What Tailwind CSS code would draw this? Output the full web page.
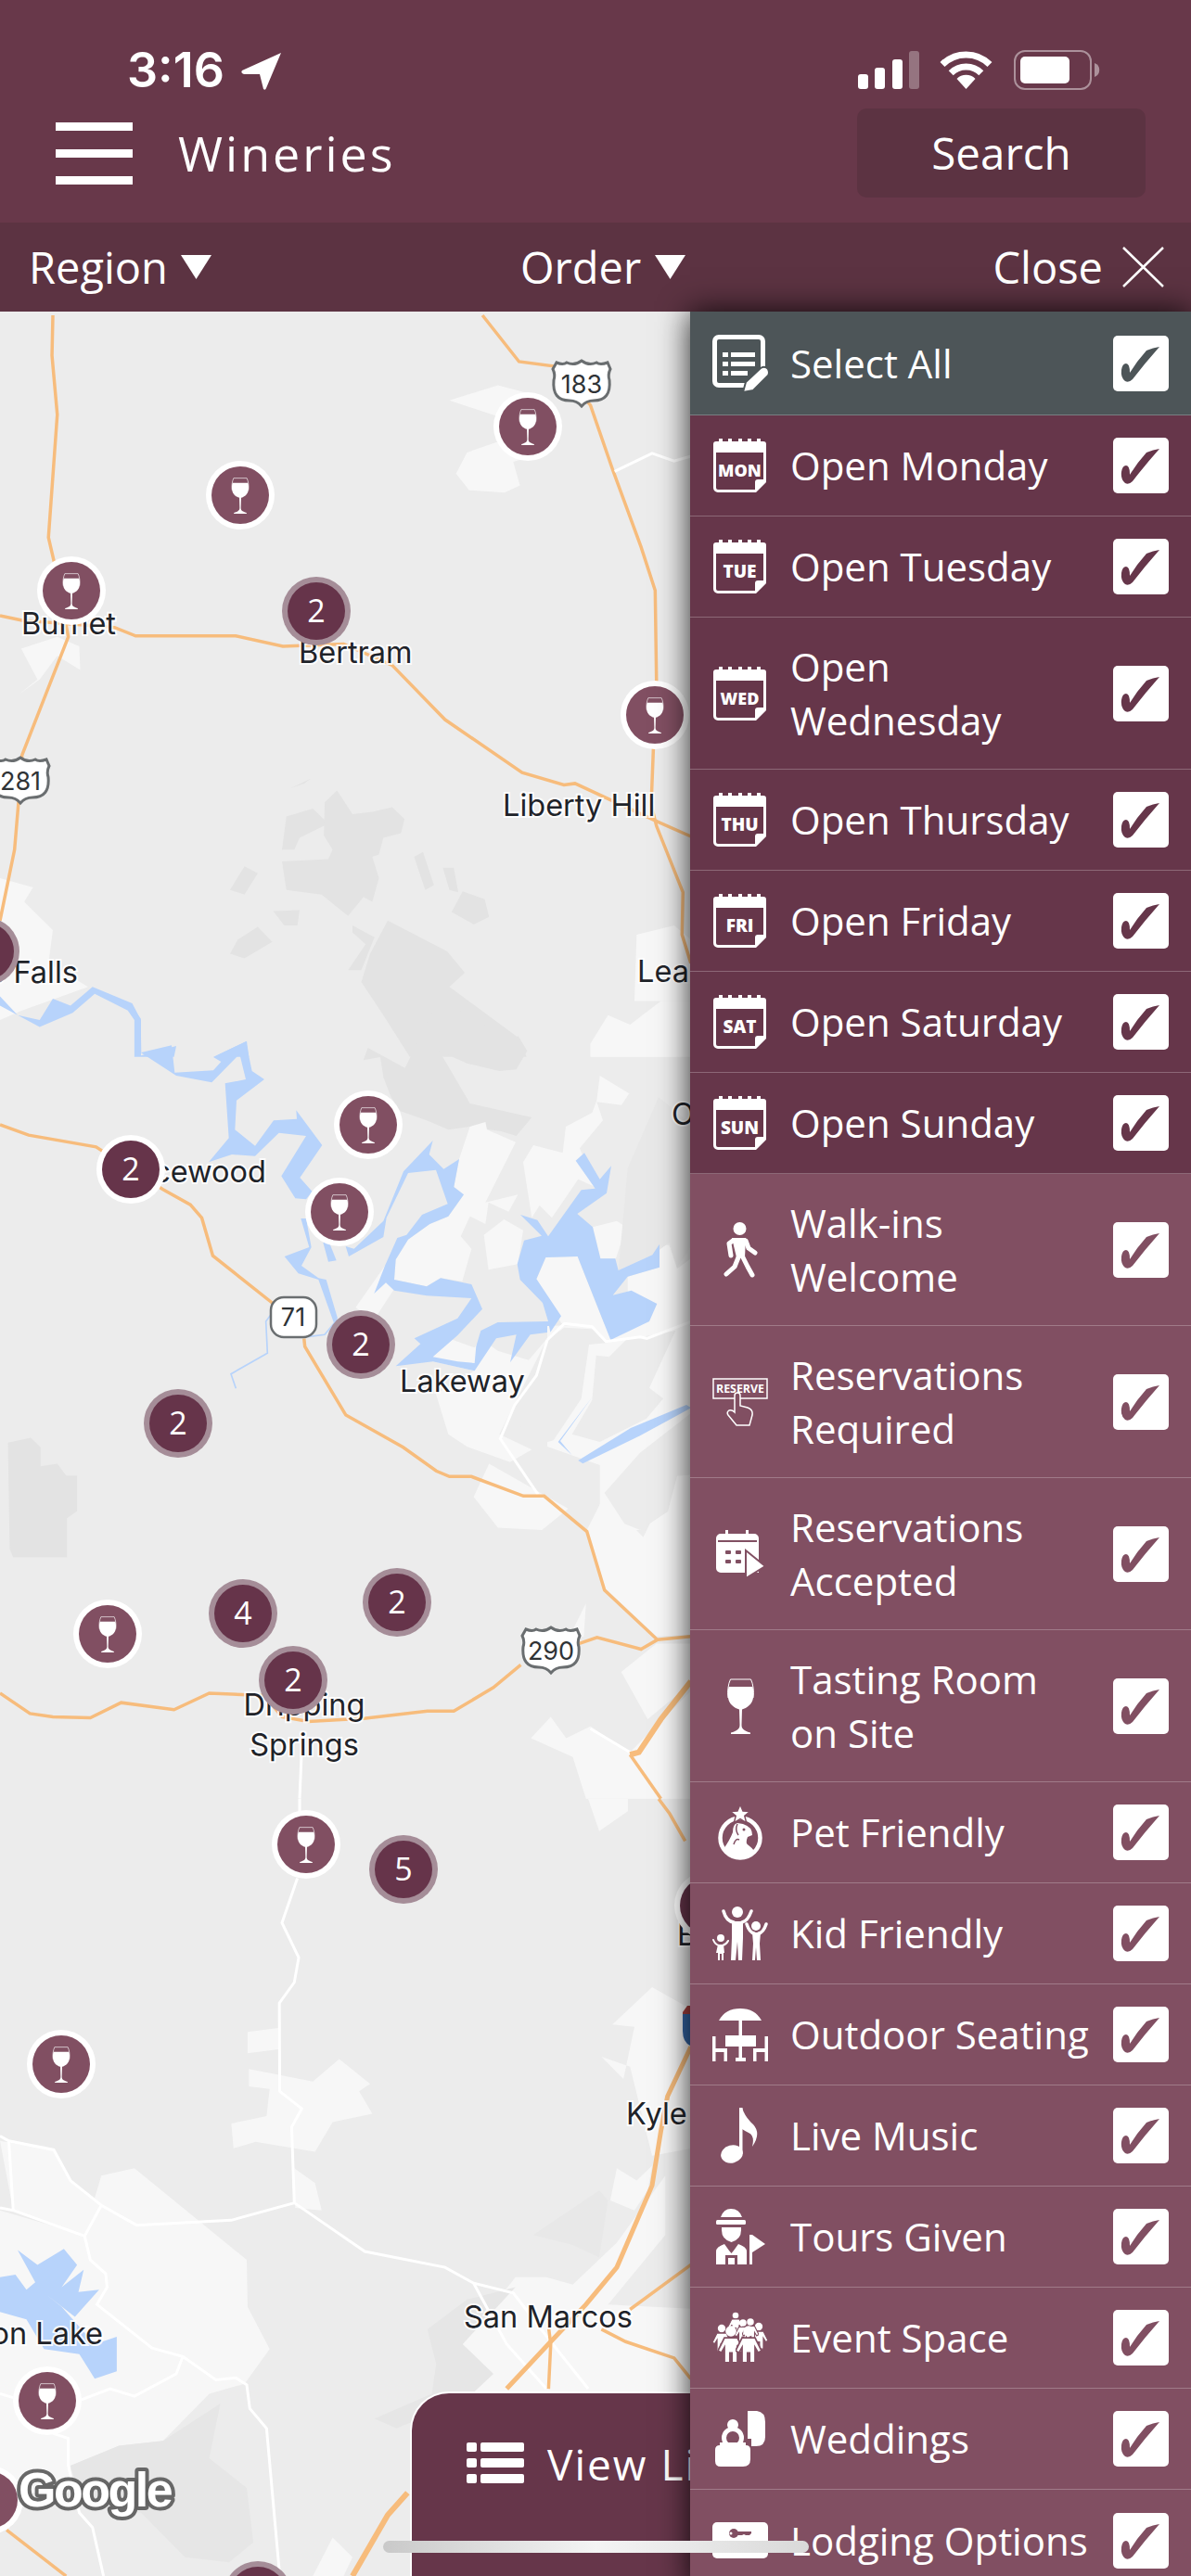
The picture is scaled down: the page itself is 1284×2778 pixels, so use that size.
<!DOCTYPE html>
<html lang="en">
<head>
<meta charset="utf-8">
<title>Wineries</title>
<script src="https://cdn.jsdelivr.net/npm/@tailwindcss/browser@4"></script>
</head>
<body class="m-0">
<svg width="0" height="0" class="absolute">
<defs>
<symbol id="check" viewBox="0 0 60 60"><path fill="currentColor" d="M36 16Q43 13 50 12Q34 30 21 47Q17 51 13 49Q8 45 9 37Q10 30 14 30Q18 30 18 40Q26 27 36 16Z"/></symbol>
<symbol id="glass" viewBox="0 0 31 60"><path fill="#fff" d="M2.6 9H28.4C29.6 13 29.6 17 29 21C28 28 22 32 17 33.5L16.5 50C16.5 54 18 56 26 58.6V60H5V58.6C13 56 14.5 54 14.5 50L14 33.5C9 32 3 28 2 21C1.4 17 1.4 13 2.6 9Z"/><path fill="none" stroke="#fff" stroke-width="1" d="M2 21C1 14 2 6 4.500 1H26.500C29 6 30 14 29 21"/></symbol>
<symbol id="cal" viewBox="0 0 57 58"><path fill="#fff" d="M3 3H6V0H10V3H16V0H20V3H27V0H31V3H37V0H41V3H47V0H51V3H54A3 3 0 0 1 57 6V47L46 58H5A5 5 0 0 1 0 53V6A3 3 0 0 1 3 3Z"/><path fill="currentColor" d="M3 15H54V44H48A3 3 0 0 0 45 47V55H5A2 2 0 0 1 3 53Z"/></symbol>
<g id="mw"><circle r="37" fill="#fff"/><circle r="31" fill="#814f62"/><use href="#glass" x="-10.500" y="-19" width="21" height="39"/></g>
<g id="mc"><circle r="37" fill="#a58d98"/><circle r="31" fill="#66344a"/></g>
<g id="mcw"><circle r="37" fill="#fff"/><circle r="31" fill="#66344a"/></g>
<path id="shield" fill="#fff" stroke="#6a6e70" stroke-width="3" d="M600 391Q607 394 611 391Q619 395 627 389Q635 395 643 391Q647 394 655 391L658 398Q655 404 657 410Q659 432 640 432Q632 432 627 438Q622 432 614 432Q595 432 597 410Q599 404 596 398Z"/>
<symbol id="person" viewBox="0 0 24 34"><circle cx="12" cy="5" r="5" fill="#fff"/><path fill="#fff" stroke="#814f62" stroke-width="1.500" d="M6 11H18L24 23L21 25L18 20V34H13V25H11V34H6V20L3 25L0 23Z"/></symbol>
</defs>
</svg>

<div class="relative w-[1284px] h-[2778px] overflow-hidden font-['Open_Sans',sans-serif] text-white bg-[#ececec]">
  <header class="h-[240px] bg-[#68384a]">
    <div class="h-[117px] flex items-start pt-[54px]">
      <span class="ml-[137px] w-[115px] text-[52px] leading-[44px] font-semibold font-['Inter',sans-serif] tracking-[0px]">3:16</span>
      <svg class="ml-[8px] mt-[3px]" width="43" height="40" viewBox="0 0 43 40"><path fill="#fff" d="M43 0L1 19Q-1 22 3 23L20 23L24 39Q26 41 27 38Z"/></svg>
      <svg class="ml-[622px] mt-[1px]" width="66" height="41" viewBox="0 0 66 41"><rect x="0" y="25" width="11" height="16" rx="3" fill="#fff"/><rect x="18" y="18" width="11" height="23" rx="3" fill="#fff"/><rect x="37" y="9" width="11" height="32" rx="3" fill="#fff"/><rect x="55" y="0" width="11" height="41" rx="3" fill="#fff" fill-opacity=".3"/></svg>
      <svg class="ml-[22px]" width="57" height="43" viewBox="0 0 57 43"><path fill="none" stroke="#fff" stroke-width="7" d="M3 15.500A36 36 0 0 1 54 15.500M12.200 24.700A23 23 0 0 1 44.800 24.700"/><path fill="#fff" d="M28.500 42L18.500 31A14 14 0 0 1 38.500 31Z"/></svg>
      <svg class="ml-[23px]" width="94" height="43" viewBox="0 0 94 43"><rect x="1" y="1" width="82" height="41" rx="11" fill="none" stroke="#fff" stroke-opacity=".45" stroke-width="2"/><rect x="7" y="7" width="53" height="29" rx="5" fill="#fff"/><path fill="#fff" fill-opacity=".45" d="M87 14A8 8 0 0 1 87 29Z"/></svg>
    </div>
    <div class="h-[96px] flex items-center">
      <div class="ml-[60px] w-[83px] flex flex-col gap-[20px]">
        <span class="block h-[9px] bg-white"></span>
        <span class="block h-[9px] bg-white"></span>
        <span class="block h-[9px] bg-white"></span>
      </div>
      <h1 class="ml-[49px] text-[52px] leading-[60px] font-medium tracking-[3px]">Wineries</h1>
      <div class="ml-auto mr-[49px] w-[311px] h-[96px] rounded-[10px] bg-[#5c3342] flex items-center justify-center text-[47.500px]">Search</div>
    </div>
  </header>

  <div class="h-[96px] bg-[#5c3342] flex items-center text-[47px] leading-[60px]">
    <div class="ml-[31px] w-[530px] flex items-center gap-[14px]">
      <span>Region</span>
      <svg width="33" height="26" viewBox="0 0 33 26"><path fill="#fff" d="M0 0H33L16.500 26Z"/></svg>
    </div>
    <div class="w-[300px] flex items-center gap-[15px]">
      <span>Order</span>
      <svg width="33" height="26" viewBox="0 0 33 26"><path fill="#fff" d="M0 0H33L16.500 26Z"/></svg>
    </div>
    <div class="ml-auto mr-[29px] flex items-center gap-[21px]">
      <span>Close</span>
      <svg width="45" height="44" viewBox="0 0 45 44"><path stroke="#fff" stroke-width="2.500" d="M1 1L44 43M44 1L1 43"/></svg>
    </div>
  </div>

  <main class="relative h-[2442px]">
    <svg class="absolute left-0 top-0" width="760" height="2442" viewBox="0 336 760 2442">
      <!-- upper map -->
      <g transform="translate(0 340) scale(.475 .51)">
        <g fill="#f7f7f7">
          <path d="M1020 180L1130 148L1200 165L1215 240L1060 290L1035 335L1065 370L1145 375L1180 360L1165 310L1200 300L1215 240Z"/>
          <path d="M48 705L130 680L180 700L182 750L130 720L90 770L45 800L85 770Z"/>
          <path d="M0 1190L75 1210L55 1240L120 1300L110 1370L200 1420L50 1470L0 1490Z"/>
          <path d="M1445 1310L1530 1290L1568 1320V1450L1440 1450Z"/>
          <path d="M1340 1540L1380 1480L1430 1500L1500 1450L1568 1450V1568H1340Z"/>
        </g>
        <g fill="#e3e3e3">
          <path d="M660 1000L705 980L690 990Z"/>
          <path d="M650 1060L710 1043L745 1075L680 1105L668 1130L640 1130Z"/>
          <path d="M737 1030L765 1005L800 1055L845 1050L890 1040L918 1065L910 1095L870 1105L860 1140L845 1145L860 1190L845 1240L825 1230L790 1270L730 1225L650 1215L640 1155L745 1150L755 1130L735 1100Z"/>
          <path d="M555 1165L585 1180L555 1225L522 1215Z"/>
          <path d="M620 1260L680 1258L675 1290L645 1290Z"/>
          <path d="M585 1293L618 1325L555 1360L522 1350L540 1320Z"/>
          <path d="M940 1145L960 1135L985 1205L965 1215Z"/>
          <path d="M1005 1168L1030 1168L1040 1220L1020 1215Z"/>
          <path d="M1050 1218L1100 1235L1110 1272L1075 1288L1025 1262Z"/>
          <path d="M800 1290L850 1315L820 1385L790 1385L830 1330L800 1305Z"/>
          <path d="M880 1280L1015 1345L1055 1390L1020 1420L1180 1530L1195 1568H930L870 1480L820 1410L840 1350Z"/>
        </g>
        <path fill="#b7d3fb" d="M0 1440L40 1480L90 1490L120 1445L160 1460L210 1420L300 1455L320 1490V1565L400 1545L395 1568H305V1490L290 1470L215 1435L165 1475L90 1505L0 1460Z"/>
        <path fill="#b7d3fb" d="M485 1568L560 1535L565 1568Z"/>
        <g fill="none" stroke="#f7bc7c" stroke-width="3.500">
          <path vector-effect="non-scaling-stroke" d="M120 0L118 85L130 210L110 470L125 530L155 680L50 930L42 1030L33 1130L0 1280"/>
          <path vector-effect="non-scaling-stroke" d="M0 635L50 645L260 660L308 678L535 678L642 700L780 695L890 740L1010 855L1185 967L1280 993L1305 990L1490 1070L1568 1102"/>
          <path vector-effect="non-scaling-stroke" d="M1095 0L1178 98L1260 108L1340 190L1390 325L1455 490L1487 582L1490 775L1483 915L1478 1035L1490 1080L1550 1220L1548 1310L1568 1370"/>
        </g>
        <path fill="none" stroke="#fff" stroke-width="3" vector-effect="non-scaling-stroke" d="M1395 330L1480 292L1530 308L1568 298"/>
      </g>
      <!-- middle map: wide features -->
      <g transform="translate(0 1140) scale(.475 .51)">
        <g fill="#f7f7f7">
          <path d="M1370 930L1460 1015L1530 880L1600 900V1220L1490 1225L1370 1120L1332 1000Z"/>
          <path d="M1075 930L1110 860L1290 955L1230 1000L1130 995Z"/>
          <path d="M1205 1440L1250 1395L1285 1440L1340 1415L1430 1470L1600 1310V1568H1330L1300 1480Z"/>
          <path d="M1290 1230L1330 1155L1325 1225Z"/>
          <path d="M1410 1300L1490 1240L1600 1240V1300L1470 1400Z"/>
        </g>
        <path fill="#e3e3e3" d="M18 815L70 805L92 825V865L130 860L150 885H175V960L152 975V1058H30L22 1040Z"/>
      </g>
      <!-- Lake Travis, west half -->
      <g transform="translate(130 1090) scale(.33333)">
        <path fill="#e3e3e3" d="M785 160L800 120L920 185L1010 0H1100L1280 105L1285 80L1315 130L1280 190L1225 195L1120 170L1030 130L1060 180L1130 300L1330 345L1280 405L1230 390L1130 375L1060 385L990 355L905 325L875 280L850 215L840 150Z"/>
        <g fill="#f7f7f7">
          <path d="M1130 375L1180 360L1185 385L1278 425L1180 620L1285 595L1255 650L1190 620L1180 690L1130 665L1100 730L1135 770L1105 875L1035 865L990 892L885 870L890 805L930 740L1000 690L1060 665L1110 595L1078 570L1095 480Z"/>
          <path d="M760 960L855 825L885 900L820 1000Z"/>
          <path d="M1010 1120L1060 1060L1145 1090L1165 1060L1220 1100L1320 1130L1380 1060L1370 1080L1270 1280L1225 1370L1330 1420L1260 1460L1120 1410L1060 1370L1020 1240L1145 1165L1010 1135Z"/>
        </g>
        <g fill="#b7d3fb">
          <path d="M45 0L65 25L67 135L165 112L175 200L300 193L325 165L300 150L405 100L425 195L465 222L375 290L370 385L435 437L495 355L570 350L568 322L652 435L580 540L620 585L600 610L565 607L520 535L600 405L512 395L435 470L360 465L285 490L350 412L338 235L405 222L385 140L295 232L180 210L65 135L45 125Z"/>
          <path d="M583 672L600 672L617 765L585 825L640 865L665 870L702 995L690 1010L640 870L575 850L530 795L610 765Z"/>
          <path d="M655 750L675 750L698 808L672 812Z"/>
          <path d="M738 795L850 732L860 670L930 525L1020 515L1058 625L975 660L925 725L895 735L855 825L820 915L858 880L885 905L990 922L1135 930L1090 995L950 1060L970 1078L890 1150L1010 1135L1145 1165L1215 1060L1280 1048L1260 1138L1325 1048L1385 1040L1425 988L1383 1005L1220 1008L1165 1035L1150 1085L1145 1140L1090 1135L1010 1120L1090 1050L1170 965L1135 885L1035 865L990 892L885 870L890 805L930 740L1000 690L1060 665L1110 595L1078 570L1095 480L1045 512L998 465L1010 420L915 520L850 680L755 770L728 762Z"/>
        </g>
        <g fill="none" stroke="#b7d3fb" stroke-width="5">
          <path d="M485 985L470 1005L475 1108L357 1175L373 1222M605 1055L660 1048L700 1000"/>
        </g>
      </g>
      <!-- Lake Travis, east half -->
      <g transform="translate(490 1150) scale(.33333)">
        <g fill="#f7f7f7">
          <path d="M222 310L255 255L350 280L360 195L445 150L460 110L470 30L565 88L540 125L460 115L480 175L405 265L455 390L400 365L315 490L275 450L250 490Z"/>
          <path d="M95 545L160 495L222 530L205 640L110 658Z"/>
          <path d="M265 688L295 618L398 615L505 885L345 830Z"/>
          <path d="M447 520L525 500L555 520L522 622L472 622Z"/>
          <path d="M660 570L695 580L720 655L780 610V830L640 850L600 830L650 770L560 730L560 680L660 650Z"/>
          <path d="M300 840L780 825V1330L600 1500H470L470 1290L300 1230Z"/>
        </g>
        <g fill="#ececec">
          <path d="M300 885L355 845L445 850L490 895L435 900L410 1075L320 1210L250 1230L190 1120L260 1010Z"/>
          <path d="M458 935L500 940L555 885L715 855L630 1040L675 1075L620 1140L470 1215L380 1190L445 1080Z"/>
          <path d="M485 1380L600 1250L780 1110V1320L720 1325L690 1440L600 1500L550 1480Z"/>
        </g>
        <path fill="#e8e8e8" d="M560 330L660 100L780 200V560L720 650L695 570L640 610L530 660Z"/>
        <g fill="#b7d3fb">
          <path d="M345 808L265 688L295 618L398 615L505 885L630 825L655 768L572 725L512 740L560 680L663 650V575L640 610L530 660L520 622L472 622L447 520L397 477L492 410L507 322L470 365L420 280L392 305L455 395L410 400L303 550L268 497L213 480L282 548L225 563L203 640L212 690L285 765L303 825L310 860Z"/>
          <path d="M400 1275L570 1170L750 1095L765 1105L600 1195L415 1285Z"/>
          <path d="M445 1070L335 1215L380 1258L342 1212Z"/>
        </g>
        <path fill="none" stroke="#fff" stroke-width="9" d="M300 885L355 832L445 842L490 890L600 875L622 880L780 820M300 885L265 1000L195 1095L148 1205L270 1385"/>
      </g>
      <!-- middle map: roads -->
      <g transform="translate(0 1140) scale(.475 .51)">
        <path fill="none" stroke="#fff" stroke-width="3" vector-effect="non-scaling-stroke" d="M680 1568L685 1460M1340 1420L1430 1470"/>
        <g fill="none" stroke="#f7bc7c" stroke-width="3.500">
          <path vector-effect="non-scaling-stroke" d="M0 143L65 165L218 190L298 238L370 280L432 312L458 340L483 420L625 525"/>
          <path vector-effect="non-scaling-stroke" d="M690 595L692 612L785 757L915 825L990 875L1020 887L1070 887L1188 928L1235 928L1332 1003L1372 1127L1492 1232L1455 1252L1355 1227L1315 1240M1492 1232L1568 1225"/>
          <path vector-effect="non-scaling-stroke" d="M1182 1285L1120 1333L1030 1383L970 1383L830 1398L700 1405L640 1395L600 1350L475 1345L395 1380L275 1365L205 1397L120 1395L68 1388L0 1345"/>
          <path vector-effect="non-scaling-stroke" d="M1430 1475L1500 1568"/>
          <path vector-effect="non-scaling-stroke" stroke-width="6" d="M1568 1320L1500 1400L1450 1470L1430 1475"/>
        </g>
      </g>
      <!-- lower map -->
      <g transform="translate(0 1940) scale(.475 .5345)">
        <g fill="#f7f7f7">
          <path d="M1335 0H1425V25L1360 65Z"/>
          <path d="M562 470L632 462V505L562 513Z"/>
          <path d="M565 545L710 570L770 525L840 575L815 590L845 635L755 652L715 712L580 692L530 705L525 655L605 640L612 585L565 580Z"/>
          <path d="M668 745L715 775L730 830L670 825Z"/>
          <path d="M0 830L190 880L230 760L305 745L560 930L562 1025L612 1110L555 1180L475 1200L370 1295L270 1305L160 1345L155 1400H0Z"/>
          <path d="M0 690L120 708L160 770L220 810L230 820L190 880L30 830Z"/>
          <path d="M1390 455L1480 380L1600 440V700L1480 720L1430 540L1365 520L1415 565L1440 460Z"/>
          <path d="M1050 1100L1170 965L1240 965L1300 980L1400 895L1510 760L1510 880L1380 1020L1600 1030V1200H1050Z"/>
          <path d="M1400 745L1445 770L1480 740L1470 790L1440 830L1385 810Z"/>
          <path d="M710 1568L755 1490L800 1530L780 1568Z"/>
        </g>
        <path fill="#e6e6e6" d="M160 1345L270 1305L370 1295L500 1220L475 1330L560 1390L575 1500L520 1540L420 1530L320 1440L190 1430Z"/>
        <path fill="#e6e6e6" d="M970 1070L1060 1010L1170 985L1050 1100L1120 1160L1060 1210L900 1270L850 1250L980 1200L990 1140Z"/>
        <path fill="#e8e8e8" d="M1210 880L1360 790L1380 810L1360 925L1300 900Z"/>
        <path fill="#b7d3fb" d="M0 965L35 960L60 990L80 975L40 910L85 940L145 908L175 940L140 985L190 950L178 995L225 990L170 1045L105 1000L140 1025L215 1100L265 1085V1155L215 1170L180 1120L100 1110L60 1050L0 1035Z"/>
        <g fill="none" stroke="#fff" stroke-width="3">
          <path vector-effect="non-scaling-stroke" d="M680 0V25M675 160L640 250L678 320L668 370L634 412L635 590L685 625L662 662L668 815L525 850L310 860L230 820L160 770L122 708L20 690L0 680M20 690L30 830L0 825M30 830L192 882L230 820M192 882L205 930L240 958L243 985L220 1020L345 1108L415 1125L490 1172L535 1168L560 1182L567 1230L605 1270L635 1568M668 815L828 913L1010 945L1075 977L1165 997L1250 1095L1335 1190M1075 977L1150 1100L1240 1190M415 1125L400 1160L305 1205L250 1190L185 1212M0 1200L30 1208M120 1280L155 1290V1345L180 1440L210 1470L235 1568"/>
        </g>
        <g fill="none" stroke="#f7bc7c" stroke-width="3.500">
          <path vector-effect="non-scaling-stroke" d="M1495 0L1520 30L1555 85"/>
          <path vector-effect="non-scaling-stroke" stroke-width="5" d="M1568 500L1515 600L1500 670L1480 780L1400 945L1330 1020L1250 1095L1150 1190"/>
          <path vector-effect="non-scaling-stroke" d="M1245 1190L1250 1100L1245 1065M1568 940L1430 1030M1365 1070L1420 1095L1530 1128L1568 1170M15 1475L150 1568"/>
          <path vector-effect="non-scaling-stroke" stroke-width="6" d="M925 1400L880 1445L800 1568"/>
        </g>
      </g>

      <!-- route shields -->
      <g font-family="Inter, sans-serif" font-size="27" fill="#2f3336" text-anchor="middle">
        <use href="#shield"/>
        <text x="627" y="424">183</text>
        <use href="#shield" transform="translate(-605 428)"/>
        <text x="22" y="852">281</text>
        <rect x="292" y="1399" width="49" height="43" rx="14" fill="#fff" stroke="#6a6e70" stroke-width="2.500"/>
        <text x="316" y="1430">71</text>
        <use href="#shield" transform="translate(-33 1366)"/>
        <text x="594" y="1790">290</text>
        <path fill="#3465a4" d="M736 2172H760V2190Q752 2204 744 2206Q736 2202 736 2190Z"/>
        <path fill="#a4403f" d="M736 2170L741 2163L760 2163V2172H736Z"/>
      </g>

      <!-- place labels -->
      <g font-family="Inter, sans-serif" font-size="32.500" fill="#1f2329" stroke="#fff" stroke-width="4" stroke-opacity=".85" paint-order="stroke">
        <text x="23" y="684">Burnet</text>
        <text x="322" y="715">Bertram</text>
        <text x="542" y="880">Liberty Hill</text>
        <text x="84" y="1060" text-anchor="end">Marble Falls</text>
        <text x="687" y="1059">Leander</text>
        <text x="287" y="1275" text-anchor="end">Spicewood</text>
        <text x="724" y="1213">Oak Hill</text>
        <text x="431" y="1501">Lakeway</text>
        <text x="328" y="1850" text-anchor="middle">Dripping</text>
        <text x="328" y="1893" text-anchor="middle">Springs</text>
        <text x="675" y="2291">Kyle</text>
        <text x="730" y="2098">Buda</text>
        <text x="500" y="2510">San Marcos</text>
        <text x="111" y="2528" text-anchor="end">Canyon Lake</text>
      </g>

      <!-- markers -->
      <use href="#mw" x="259" y="534"/>
      <use href="#mw" x="569" y="460"/>
      <use href="#mw" x="77" y="637"/>
      <use href="#mw" x="706" y="771"/>
      <use href="#mw" x="397" y="1213"/>
      <use href="#mw" x="366" y="1307"/>
      <use href="#mw" x="116" y="1762"/>
      <use href="#mw" x="330" y="1989"/>
      <use href="#mw" x="66" y="2226"/>
      <use href="#mw" x="51" y="2589"/>
      <use href="#mw" x="-12" y="2696"/>
      <use href="#mc" x="341" y="659"/>
      <use href="#mc" x="-16" y="1026"/>
      <use href="#mcw" x="141" y="1261"/>
      <use href="#mc" x="389" y="1450"/>
      <use href="#mc" x="192" y="1535"/>
      <use href="#mc" x="262" y="1740"/>
      <use href="#mc" x="428" y="1728"/>
      <use href="#mc" x="316" y="1812"/>
      <use href="#mc" x="435" y="2016"/>
      <use href="#mcw" x="764" y="2055"/>
      <use href="#mc" x="278" y="2799"/>
      <g font-family="'Open Sans', sans-serif" font-size="34" font-weight="500" fill="#fff" text-anchor="middle">
        <text x="341" y="671">2</text>
        <text x="141" y="1273">2</text>
        <text x="389" y="1462">2</text>
        <text x="192" y="1547">2</text>
        <text x="262" y="1752">4</text>
        <text x="428" y="1740">2</text>
        <text x="316" y="1824">2</text>
        <text x="435" y="2028">5</text>
      </g>
      <!-- Google logo -->
      <text x="20" y="2703" font-family="'Liberation Sans', sans-serif" font-weight="700" font-size="52" letter-spacing="-2.500" fill="#fff" stroke="#606060" stroke-width="8" paint-order="stroke" stroke-linejoin="round" stroke-opacity=".95">Google</text>
    </svg>

    <!-- View list card -->
    <div class="absolute left-[442px] top-[2243px] w-[400px] h-[220px] rounded-tl-[42px] border-l-2 border-t-2 border-white bg-[#66364a] flex items-start pl-[59px] pt-[49px] gap-[25px]">
      <svg class="mt-[4px]" width="62" height="44" viewBox="0 0 62 44"><g fill="#fff"><rect x="0" y="0" width="11" height="10" rx="2"/><rect x="15" y="0" width="47" height="10" rx="2"/><rect x="0" y="17" width="11" height="10" rx="2"/><rect x="15" y="17" width="47" height="10" rx="2"/><rect x="0" y="34" width="11" height="10" rx="2"/><rect x="15" y="34" width="47" height="10" rx="2"/></g></svg>
      <span class="text-[46px] leading-[54px] tracking-[2px] whitespace-nowrap">View List</span>
    </div>

    <!-- Filter panel -->
    <aside class="absolute right-0 top-0 w-[540px] shadow-[0_0_32px_rgba(0,0,0,.85)] text-[42px] leading-[58px]">
      <div class="h-[112px] flex items-center pl-6 pr-6 bg-[#4d5558] border-b border-white/25 text-[#4d5558]">
        <span class="w-[62px] shrink-0">
          <svg class="block" width="62" height="62" viewBox="0 0 62 62"><path fill="none" stroke="#fff" stroke-width="5" d="M40 54.500H7A4.500 4.500 0 0 1 2.500 50V7A4.500 4.500 0 0 1 7 2.500H50A4.500 4.500 0 0 1 54.500 7V36"/><g fill="#fff"><rect x="11" y="19" width="6" height="5"/><rect x="20" y="19" width="26" height="5"/><rect x="11" y="29" width="6" height="5"/><rect x="20" y="29" width="26" height="5"/><rect x="11" y="39" width="6" height="5"/><rect x="20" y="39" width="18" height="5"/></g><path fill="#fff" stroke="#4d5558" stroke-width="2" d="M33 62L36 51L52 36Q57 33 60 37Q62 41 60 44L44 60Z"/></svg>
        </span>
        <span class="ml-[22px] flex-1 text-white">Select All</span>
        <span class="w-[60px] h-[60px] rounded-[5px] bg-white shrink-0"><svg class="block" width="60" height="60"><use href="#check"/></svg></span>
      </div>

      <div class="h-[109px] flex items-center pl-[25px] pr-6 bg-[#66364a] border-b border-white/25 text-[#66364a]">
        <span class="relative w-[57px] h-[58px] shrink-0"><svg class="block" width="57" height="58" viewBox="0 0 57 58"><use href="#cal" width="57" height="58"/><text x="28.500" y="41" text-anchor="middle" fill="#fff" font-size="18" font-weight="800" font-family="'Open Sans', sans-serif">MON</text></svg></span>
        <span class="ml-[26px] flex-1 text-white">Open Monday</span>
        <span class="w-[60px] h-[60px] rounded-[5px] bg-white shrink-0"><svg class="block" width="60" height="60"><use href="#check"/></svg></span>
      </div>
      <div class="h-[109px] flex items-center pl-[25px] pr-6 bg-[#66364a] border-b border-white/25 text-[#66364a]">
        <span class="relative w-[57px] h-[58px] shrink-0"><svg class="block" width="57" height="58" viewBox="0 0 57 58"><use href="#cal" width="57" height="58"/><text x="28.500" y="41" text-anchor="middle" fill="#fff" font-size="19" font-weight="800" font-family="'Open Sans', sans-serif">TUE</text></svg></span>
        <span class="ml-[26px] flex-1 text-white">Open Tuesday</span>
        <span class="w-[60px] h-[60px] rounded-[5px] bg-white shrink-0"><svg class="block" width="60" height="60"><use href="#check"/></svg></span>
      </div>
      <div class="h-[164px] flex items-center pl-[25px] pr-6 bg-[#66364a] border-b border-white/25 text-[#66364a]">
        <span class="relative w-[57px] h-[58px] shrink-0"><svg class="block" width="57" height="58" viewBox="0 0 57 58"><use href="#cal" width="57" height="58"/><text x="28.500" y="41" text-anchor="middle" fill="#fff" font-size="18" font-weight="800" font-family="'Open Sans', sans-serif">WED</text></svg></span>
        <span class="ml-[26px] flex-1 text-white">Open<br>Wednesday</span>
        <span class="w-[60px] h-[60px] rounded-[5px] bg-white shrink-0"><svg class="block" width="60" height="60"><use href="#check"/></svg></span>
      </div>
      <div class="h-[109px] flex items-center pl-[25px] pr-6 bg-[#66364a] border-b border-white/25 text-[#66364a]">
        <span class="relative w-[57px] h-[58px] shrink-0"><svg class="block" width="57" height="58" viewBox="0 0 57 58"><use href="#cal" width="57" height="58"/><text x="28.500" y="41" text-anchor="middle" fill="#fff" font-size="19" font-weight="800" font-family="'Open Sans', sans-serif">THU</text></svg></span>
        <span class="ml-[26px] flex-1 text-white">Open Thursday</span>
        <span class="w-[60px] h-[60px] rounded-[5px] bg-white shrink-0"><svg class="block" width="60" height="60"><use href="#check"/></svg></span>
      </div>
      <div class="h-[109px] flex items-center pl-[25px] pr-6 bg-[#66364a] border-b border-white/25 text-[#66364a]">
        <span class="relative w-[57px] h-[58px] shrink-0"><svg class="block" width="57" height="58" viewBox="0 0 57 58"><use href="#cal" width="57" height="58"/><text x="28.500" y="41" text-anchor="middle" fill="#fff" font-size="19" font-weight="800" font-family="'Open Sans', sans-serif">FRI</text></svg></span>
        <span class="ml-[26px] flex-1 text-white">Open Friday</span>
        <span class="w-[60px] h-[60px] rounded-[5px] bg-white shrink-0"><svg class="block" width="60" height="60"><use href="#check"/></svg></span>
      </div>
      <div class="h-[109px] flex items-center pl-[25px] pr-6 bg-[#66364a] border-b border-white/25 text-[#66364a]">
        <span class="relative w-[57px] h-[58px] shrink-0"><svg class="block" width="57" height="58" viewBox="0 0 57 58"><use href="#cal" width="57" height="58"/><text x="28.500" y="41" text-anchor="middle" fill="#fff" font-size="19" font-weight="800" font-family="'Open Sans', sans-serif">SAT</text></svg></span>
        <span class="ml-[26px] flex-1 text-white">Open Saturday</span>
        <span class="w-[60px] h-[60px] rounded-[5px] bg-white shrink-0"><svg class="block" width="60" height="60"><use href="#check"/></svg></span>
      </div>
      <div class="h-[109px] flex items-center pl-[25px] pr-6 bg-[#66364a] border-b border-white/25 text-[#66364a]">
        <span class="relative w-[57px] h-[58px] shrink-0"><svg class="block" width="57" height="58" viewBox="0 0 57 58"><use href="#cal" width="57" height="58"/><text x="28.500" y="41" text-anchor="middle" fill="#fff" font-size="19" font-weight="800" font-family="'Open Sans', sans-serif">SUN</text></svg></span>
        <span class="ml-[26px] flex-1 text-white">Open Sunday</span>
        <span class="w-[60px] h-[60px] rounded-[5px] bg-white shrink-0"><svg class="block" width="60" height="60"><use href="#check"/></svg></span>
      </div>

      <div class="h-[164px] flex items-center pl-6 pr-6 bg-[#814f62] border-b border-white/25 text-[#814f62]">
        <span class="w-[60px] flex justify-center shrink-0">
          <svg width="37" height="60" viewBox="0 0 37 60"><circle cx="17.500" cy="7" r="7" fill="#fff"/><path fill="#fff" d="M9 17H24L23 38H14Z"/><path fill="none" stroke="#fff" stroke-width="5" stroke-linecap="round" stroke-linejoin="round" d="M10 20L6 23L8 36M24 20L27 28L34 33M16 38L12 48L3 56M21 38L26 48L31 57"/></svg>
        </span>
        <span class="ml-[24px] flex-1 text-white">Walk-ins<br>Welcome</span>
        <span class="w-[60px] h-[60px] rounded-[5px] bg-white shrink-0"><svg class="block" width="60" height="60"><use href="#check"/></svg></span>
      </div>
      <div class="h-[164px] flex items-center pl-6 pr-6 bg-[#814f62] border-b border-white/25 text-[#814f62]">
        <span class="w-[60px] flex justify-center shrink-0">
          <svg width="60" height="52" viewBox="0 0 60 52"><rect x="1" y="1" width="58" height="21" fill="none" stroke="#fff" stroke-width="1.500"/><text x="4" y="16" textLength="52" lengthAdjust="spacingAndGlyphs" font-size="13" font-weight="700" fill="#fff" font-family="'Open Sans', sans-serif">RESERVE</text><path fill="#814f62" stroke="#fff" stroke-width="1.500" d="M24 36V19A3 3 0 0 1 30 19V30L38 32Q44 34 43 40L40 51H26L17 40Q15 37 18 35Q21 34 24 37Z"/></svg>
        </span>
        <span class="ml-[24px] flex-1 text-white">Reservations<br>Required</span>
        <span class="w-[60px] h-[60px] rounded-[5px] bg-white shrink-0"><svg class="block" width="60" height="60"><use href="#check"/></svg></span>
      </div>
      <div class="h-[164px] flex items-center pl-6 pr-6 bg-[#814f62] border-b border-white/25 text-[#814f62]">
        <span class="w-[60px] flex justify-center shrink-0">
          <svg width="53" height="52" viewBox="0 0 53 52"><path fill="#fff" d="M5 4H10V0H13V4H32V0H35V4H41A5 5 0 0 1 46 9V46H5A5 5 0 0 1 0 41V9A5 5 0 0 1 5 4Z"/><rect x="2" y="11" width="42" height="2" fill="#814f62"/><g fill="#814f62"><rect x="10" y="22" width="6" height="4" rx="1"/><rect x="21" y="22" width="6" height="4" rx="1"/><rect x="10" y="32" width="6" height="4" rx="1"/><rect x="21" y="32" width="6" height="4" rx="1"/></g><path fill="#fff" stroke="#814f62" stroke-width="2" d="M32 22L53 39L32 52Z"/></svg>
        </span>
        <span class="ml-[24px] flex-1 text-white">Reservations<br>Accepted</span>
        <span class="w-[60px] h-[60px] rounded-[5px] bg-white shrink-0"><svg class="block" width="60" height="60"><use href="#check"/></svg></span>
      </div>
      <div class="h-[164px] flex items-center pl-6 pr-6 bg-[#814f62] border-b border-white/25 text-[#814f62]">
        <span class="w-[60px] flex justify-center shrink-0">
          <svg width="31" height="60"><use href="#glass" width="31" height="60"/></svg>
        </span>
        <span class="ml-[24px] flex-1 text-white">Tasting Room<br>on Site</span>
        <span class="w-[60px] h-[60px] rounded-[5px] bg-white shrink-0"><svg class="block" width="60" height="60"><use href="#check"/></svg></span>
      </div>
      <div class="h-[109px] flex items-center pl-6 pr-6 bg-[#814f62] border-b border-white/25 text-[#814f62]">
        <span class="w-[60px] flex justify-center shrink-0">
          <svg width="50" height="60" viewBox="0 0 50 60"><circle cx="25" cy="36" r="21.500" fill="none" stroke="#fff" stroke-width="4.500"/><path fill="#fff" stroke="#814f62" stroke-width="1.500" d="M25 0L28 7L35.500 7.500L29.800 12.300L31.600 19.600L25 15.600L18.400 19.600L20.200 12.300L14.500 7.500L22 7Z"/><path fill="#fff" d="M7 48Q14 38 17 30Q17 21 22 20L28 21Q38 24 38 33L33 35Q30 42 34 44Q38 47 40 50Q30 60 20 58Q12 56 7 48Z"/><path fill="none" stroke="#814f62" stroke-width="1.500" d="M22 21Q19 27 23 33M18 43Q20 36 24 38"/><circle cx="29" cy="27" r="1.500" fill="#814f62"/></svg>
        </span>
        <span class="ml-[24px] flex-1 text-white">Pet Friendly</span>
        <span class="w-[60px] h-[60px] rounded-[5px] bg-white shrink-0"><svg class="block" width="60" height="60"><use href="#check"/></svg></span>
      </div>
      <div class="h-[109px] flex items-center pl-6 pr-6 bg-[#814f62] border-b border-white/25 text-[#814f62]">
        <span class="w-[60px] flex justify-center shrink-0">
          <svg width="60" height="58" viewBox="0 0 60 58"><g fill="#fff"><circle cx="27" cy="6" r="6"/><circle cx="47" cy="21" r="5"/><circle cx="9" cy="34" r="4"/><path d="M21 16H33L33 34L32 58H28L27 38L25 58H20L21 34Z"/><path d="M43 28H52L51 40L52 58H48L47 44L46 58H43L44 40Z"/><path d="M6 41H12L13 50H12L12 58H10V51H8V58H6L6 50H4Z"/></g><path fill="none" stroke="#fff" stroke-width="3.500" stroke-linecap="round" d="M12 5Q15 16 23 17M32 17Q38 16 42 5M37 19Q40 28 45 29M50 29Q55 28 58 19"/><path fill="none" stroke="#fff" stroke-width="2" stroke-linecap="round" d="M1 36Q3 41 7 42M11 42Q15 41 17 37"/></svg>
        </span>
        <span class="ml-[24px] flex-1 text-white">Kid Friendly</span>
        <span class="w-[60px] h-[60px] rounded-[5px] bg-white shrink-0"><svg class="block" width="60" height="60"><use href="#check"/></svg></span>
      </div>
      <div class="h-[109px] flex items-center pl-6 pr-6 bg-[#814f62] border-b border-white/25 text-[#814f62]">
        <span class="w-[60px] flex justify-center shrink-0">
          <svg width="60" height="57" viewBox="0 0 60 57"><g fill="#fff"><path d="M7 13Q14 0 30 0Q46 0 53 13Z"/><rect x="28.500" y="13" width="3.500" height="42"/><rect x="14" y="29" width="33" height="12"/><rect x="25" y="53" width="11" height="4"/><rect x="0" y="30" width="3.500" height="27"/><rect x="0" y="43" width="16" height="4"/><rect x="12.500" y="47" width="3.500" height="10"/><rect x="56.500" y="30" width="3.500" height="27"/><rect x="44" y="43" width="16" height="4"/><rect x="44" y="47" width="3.500" height="10"/></g></svg>
        </span>
        <span class="ml-[24px] flex-1 text-white whitespace-nowrap">Outdoor Seating</span>
        <span class="w-[60px] h-[60px] rounded-[5px] bg-white shrink-0"><svg class="block" width="60" height="60"><use href="#check"/></svg></span>
      </div>
      <div class="h-[109px] flex items-center pl-6 pr-6 bg-[#814f62] border-b border-white/25 text-[#814f62]">
        <span class="w-[60px] flex justify-center shrink-0">
          <svg width="42" height="60" viewBox="0 0 42 60"><ellipse cx="12" cy="50" rx="12" ry="9.500" fill="#fff" transform="rotate(-15 12 50)"/><rect x="20" y="0" width="3.500" height="50" fill="#fff"/><path fill="#fff" d="M23 0Q26 10 35 18Q44 28 34 42Q37 30 30 27Q26 25 23 23Z"/></svg>
        </span>
        <span class="ml-[24px] flex-1 text-white">Live Music</span>
        <span class="w-[60px] h-[60px] rounded-[5px] bg-white shrink-0"><svg class="block" width="60" height="60"><use href="#check"/></svg></span>
      </div>
      <div class="h-[109px] flex items-center pl-6 pr-6 bg-[#814f62] border-b border-white/25 text-[#814f62]">
        <span class="w-[60px] flex justify-center shrink-0">
          <svg width="53" height="60" viewBox="0 0 53 60"><g fill="#fff"><path d="M5 9Q8 0 16 0Q25 0 28 9Z"/><rect x="0" y="12" width="32" height="5" rx="1.500"/><path d="M6 20H27V23Q27 33 16.500 36Q6 33 6 23Z"/><path d="M0 60V46Q0 41 9 38L14 45L16.500 48L19 45L24 38Q33 41 33 46V60H23V50H10V60Z"/><rect x="36" y="28" width="3" height="32"/><path d="M39 28L53 38L39 47Z"/><rect x="13" y="53" width="7" height="7"/></g></svg>
        </span>
        <span class="ml-[24px] flex-1 text-white">Tours Given</span>
        <span class="w-[60px] h-[60px] rounded-[5px] bg-white shrink-0"><svg class="block" width="60" height="60"><use href="#check"/></svg></span>
      </div>
      <div class="h-[109px] flex items-center pl-6 pr-6 bg-[#814f62] border-b border-white/25 text-[#814f62]">
        <span class="w-[60px] flex justify-center shrink-0">
          <svg width="60" height="57" viewBox="0 0 60 57"><use href="#person" x="17" y="0" width="16" height="24"/><use href="#person" x="0" y="10" width="20" height="36"/><use href="#person" x="40" y="8" width="20" height="36"/><use href="#person" x="24" y="6" width="18" height="30"/><use href="#person" x="32" y="5" width="18" height="30"/><use href="#person" x="6" y="13" width="28" height="44"/><use href="#person" x="25" y="13" width="28" height="44"/></svg>
        </span>
        <span class="ml-[24px] flex-1 text-white">Event Space</span>
        <span class="w-[60px] h-[60px] rounded-[5px] bg-white shrink-0"><svg class="block" width="60" height="60"><use href="#check"/></svg></span>
      </div>
      <div class="h-[109px] flex items-center pl-6 pr-6 bg-[#814f62] border-b border-white/25 text-[#814f62]">
        <span class="w-[60px] flex justify-center shrink-0">
          <svg width="55" height="60" viewBox="0 0 55 60"><g fill="#fff"><path d="M35 0H45Q54 1 54 12V28Q54 38 44 38H39V30H35Z"/><path d="M5 37H33Q38 37 38 42V52Q38 60 30 60H6Q0 60 0 54V42Q0 37 5 37Z"/><circle cx="19" cy="15" r="6"/></g><circle cx="19" cy="29" r="9.500" fill="none" stroke="#fff" stroke-width="5"/><rect x="5" y="34" width="28" height="3" fill="#fff"/></svg>
        </span>
        <span class="ml-[24px] flex-1 text-white">Weddings</span>
        <span class="w-[60px] h-[60px] rounded-[5px] bg-white shrink-0"><svg class="block" width="60" height="60"><use href="#check"/></svg></span>
      </div>
      <div class="h-[109px] flex items-center pl-6 pr-6 bg-[#814f62] text-[#814f62]">
        <span class="w-[60px] flex justify-center shrink-0">
          <svg width="60" height="39" viewBox="0 0 60 39"><rect width="60" height="39" rx="5" fill="#fff"/><circle cx="23" cy="12" r="5" fill="#814f62"/><path fill="#814f62" d="M26 10H42V12L40 14H36L34 13L32 14H26Z"/><circle cx="20" cy="12" r="1.500" fill="#fff"/></svg>
        </span>
        <span class="ml-[24px] flex-1 text-white">Lodging Options</span>
        <span class="w-[60px] h-[60px] rounded-[5px] bg-white shrink-0"><svg class="block" width="60" height="60"><use href="#check"/></svg></span>
      </div>
    </aside>
  </main>

  <div class="absolute left-[413px] top-[2740px] w-[459px] h-[13px] rounded-full bg-linear-to-r from-[#c9c9c9] via-[#f4f4f4] to-[#d9d9d9]"></div>
</div>
</body>
</html>
